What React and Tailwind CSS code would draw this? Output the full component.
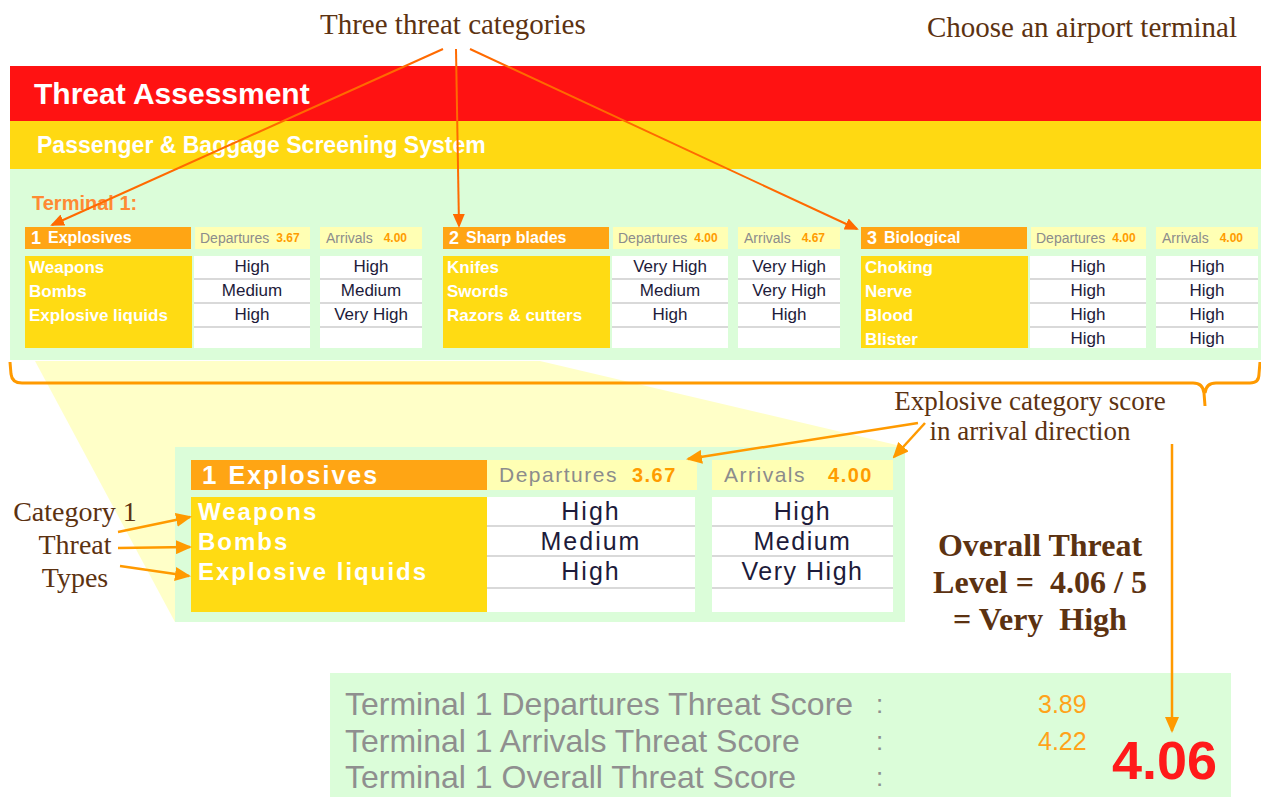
const categories = [
  {
    num: '2',
    name: 'Sharp blades',
    dep: '4.00',
    arr: '4.67',
    rows: [
      ['Knifes', 'Very High', 'Very High'],
      ['Swords', 'Medium', 'Very High'],
      ['Razors & cutters', 'High', 'High'],
      ['', '', ''],
    ],
  },
];

const groups = [
  {
    num: '1',
    name: 'Explosives',
    dep: '3.67',
    arr: '4.00',
    rows: [
      ['Weapons', 'High', 'High'],
      ['Bombs', 'Medium', 'Medium'],
      ['Explosive liquids', 'High', 'Very High'],
      ['', '', ''],
    ],
  },
  ...categories,
  {
    num: '3',
    name: 'Biological',
    dep: '4.00',
    arr: '4.00',
    rows: [
      ['Choking', 'High', 'High'],
      ['Nerve', 'High', 'High'],
      ['Blood', 'High', 'High'],
      ['Blister', 'High', 'High'],
    ],
  },
];

const serif = "font-['Liberation_Serif','Times_New_Roman',serif] text-[#5c3211]";
const smallRows = ['h-[24px]', 'h-[24px]', 'h-[24px]', 'h-[20px]'];

const CellColumn = ({ values, widthClass, rowClasses, textClass }) => (
  <div className={`${widthClass} flex flex-col`}>
    {values.map((v, i) => (
      <div
        key={i}
        className={`${rowClasses[i]} bg-white text-center text-[#1d1b3a] ${textClass} ${
          i < values.length - 1 ? 'border-b-2 border-[#d9d9d9]' : ''
        }`}
      >
        {v}
      </div>
    ))}
  </div>
);

const Group = ({ g }) => (
  <div className="w-[397px]">
    <div className="flex h-[22px]">
      <div className="w-[166px] bg-[#ffa514] text-white font-bold flex items-center pl-[6px]">
        <span className="text-[18px] leading-none">{g.num}</span>
        <span className="text-[16px] leading-none ml-[7px]">{g.name}</span>
      </div>
      <div className="ml-[4px] w-[115px] bg-[#ffffb4] flex items-center pl-[5px]">
        <span className="text-[14px] text-[#8c8c8c]">Departures</span>
        <span className="text-[12px] font-bold text-[#ff9c00] ml-[7px]">{g.dep}</span>
      </div>
      <div className="ml-[10px] w-[102px] bg-[#ffffb4] flex items-center pl-[6px]">
        <span className="text-[14px] text-[#8c8c8c]">Arrivals</span>
        <span className="text-[12px] font-bold text-[#ff9c00] ml-[11px]">{g.arr}</span>
      </div>
    </div>
    <div className="flex mt-[7px]">
      <div className="w-[167px] h-[92px] bg-[#ffdb13] pl-[4px] text-white font-bold text-[17px]">
        {g.rows.map((r, i) => (
          <div key={i} className={`${smallRows[i]} leading-[24px]`}>
            {r[0]}
          </div>
        ))}
      </div>
      <div className="ml-[2px]">
        <CellColumn
          values={g.rows.map((r) => r[1])}
          widthClass="w-[116px]"
          rowClasses={smallRows}
          textClass="text-[17px] leading-[22px]"
        />
      </div>
      <div className="ml-[10px]">
        <CellColumn
          values={g.rows.map((r) => r[2])}
          widthClass="w-[102px]"
          rowClasses={smallRows}
          textClass="text-[17px] leading-[22px]"
        />
      </div>
    </div>
  </div>
);

const Overlay = () => (
  <svg className="absolute inset-0 pointer-events-none" width="1261" height="798">
    <defs>
      <marker id="hRed" markerWidth="14" markerHeight="12" refX="12" refY="6" orient="auto" markerUnits="userSpaceOnUse">
        <path d="M0,0 L14,6 L0,12 Z" fill="#ff6a00" />
      </marker>
      <marker id="hOr" markerWidth="16" markerHeight="14" refX="14" refY="7" orient="auto" markerUnits="userSpaceOnUse">
        <path d="M0,0 L16,7 L0,14 Z" fill="#ff9a00" />
      </marker>
    </defs>
    {/* three categories */}
    <g stroke="#ff6a00" strokeWidth="2" fill="none">
      <line x1="443" y1="49" x2="52" y2="225" markerEnd="url(#hRed)" />
      <line x1="456" y1="49" x2="459" y2="226" markerEnd="url(#hRed)" />
      <line x1="470" y1="49" x2="857" y2="229" markerEnd="url(#hRed)" />
    </g>
    {/* brace */}
    <path
      d="M10,362 L11,374 Q12,383 22,383 L1193,383 Q1203,383 1204,393 L1205,406 M1205,393 Q1206,383 1216,383 L1250,383 Q1259,383 1259,374 L1260,362"
      stroke="#ff9a00"
      strokeWidth="3"
      fill="none"
    />
    <g stroke="#ff9a00" strokeWidth="2.5" fill="none">
      <line x1="118" y1="532" x2="190" y2="517" markerEnd="url(#hOr)" />
      <line x1="118" y1="548" x2="190" y2="547" markerEnd="url(#hOr)" />
      <line x1="120" y1="566" x2="189" y2="576" markerEnd="url(#hOr)" />
      <line x1="918" y1="423" x2="688" y2="459" markerEnd="url(#hOr)" />
      <line x1="925" y1="423" x2="894" y2="457" markerEnd="url(#hOr)" />
      <line x1="1172" y1="444" x2="1172" y2="731" markerEnd="url(#hOr)" />
    </g>
  </svg>
);

const zoom = groups[0];
const zoomRows = ['h-[30px]', 'h-[30px]', 'h-[30px]'];

export default function App() {
  return (
    <div className="relative w-[1261px] h-[798px] overflow-hidden bg-white font-['Liberation_Sans',Arial,sans-serif]">
      {/* zoom projection */}
      <svg className="absolute inset-0" width="1261" height="798">
        <polygon points="35,361 540,361 905,447 905,622 175,622" fill="#ffffc8" />
      </svg>

      <div className="relative">
        {/* annotations on top */}
        <div className={`h-[66px] flex justify-between ${serif} text-[29px] leading-[32px]`}>
          <div className="pl-[320px] pt-[8px]">Three threat categories</div>
          <div className="pr-[24px] pt-[11px]">Choose an airport terminal</div>
        </div>

        <div className="ml-[10px] h-[55px] bg-[#ff1212] flex items-center pl-[24px] text-white font-bold text-[30px]">
          Threat Assessment
        </div>
        <div className="ml-[10px] h-[48px] bg-[#ffd912] flex items-center pl-[27px] text-white font-bold text-[23px]">
          Passenger &amp; Baggage Screening System
        </div>
        <div className="ml-[10px] h-[191px] bg-[#dbfdd9] pl-[15px] pt-[22px]">
          <div className="pl-[7px] text-[20px] leading-[24px] font-bold text-[#ff8a33]">Terminal 1:</div>
          <div className="flex gap-[21px] mt-[12px]">
            {groups.map((g) => (
              <Group key={g.num} g={g} />
            ))}
          </div>
        </div>

        {/* spacer with annotation */}
        <div className="h-[87px]">
          <div className={`ml-[880px] w-[300px] pt-[26px] text-center text-[27px] leading-[30px] ${serif}`}>
            Explosive category score
            <br />
            in arrival direction
          </div>
        </div>

        {/* zoomed category */}
        <div className="flex h-[175px]">
          <div className={`w-[150px] mr-[25px] pt-[48px] text-center text-[28px] leading-[33px] ${serif}`}>
            Category 1
            <br />
            Threat
            <br />
            Types
          </div>
          <div className="w-[730px] bg-[#dbfdd9] pl-[16px] pt-[13px]">
            <div className="flex h-[30px]">
              <div className="w-[296px] bg-[#ffa514] text-white font-bold flex items-center pl-[11px] tracking-[2px]">
                <span className="text-[26px] leading-none">{zoom.num}</span>
                <span className="text-[25px] leading-none ml-[10px]">{zoom.name}</span>
              </div>
              <div className="w-[210px] bg-[#ffffb4] flex items-center pl-[12px] tracking-[1.5px]">
                <span className="text-[21px] text-[#8c8c8c]">Departures</span>
                <span className="text-[20px] font-bold text-[#ff9c00] ml-[14px]">{zoom.dep}</span>
              </div>
              <div className="ml-[15px] w-[181px] bg-[#ffffb4] flex items-center pl-[12px] tracking-[1.5px]">
                <span className="text-[21px] text-[#8c8c8c]">Arrivals</span>
                <span className="text-[20px] font-bold text-[#ff9c00] ml-[22px]">{zoom.arr}</span>
              </div>
            </div>
            <div className="flex mt-[7px]">
              <div className="w-[296px] h-[115px] bg-[#ffdb13] pl-[7px] text-white font-bold text-[24px] tracking-[2px]">
                {zoom.rows.slice(0, 3).map((r, i) => (
                  <div key={i} className="h-[30px] leading-[30px]">
                    {r[0]}
                  </div>
                ))}
              </div>
              <div className="w-[208px]">
                <CellColumn
                  values={zoom.rows.slice(0, 3).map((r) => r[1])}
                  widthClass="w-[208px]"
                  rowClasses={zoomRows}
                  textClass="text-[25px] leading-[28px] tracking-[2px]"
                />
                <div className="h-[25px] bg-white border-t-2 border-[#d9d9d9]" />
              </div>
              <div className="ml-[17px] w-[181px]">
                <CellColumn
                  values={zoom.rows.slice(0, 3).map((r) => r[2])}
                  widthClass="w-[181px]"
                  rowClasses={zoomRows}
                  textClass="text-[25px] leading-[28px] tracking-[1.5px]"
                />
                <div className="h-[25px] bg-white border-t-2 border-[#d9d9d9]" />
              </div>
            </div>
          </div>
          <div className={`ml-[5px] w-[260px] pt-[80px] text-center font-bold text-[32px] leading-[37px] ${serif}`}>
            Overall Threat
            <br />
            Level = &nbsp;4.06 / 5
            <br />
            = Very &nbsp;High
          </div>
        </div>

        {/* terminal summary */}
        <div className="ml-[330px] mt-[51px] w-[901px] h-[124px] bg-[#dbfdd9] flex">
          <div className="grid grid-cols-[531px_162px_70px] pl-[15px] pt-[14px] text-[32px] leading-[35px]">
            {[
              ['Terminal 1 Departures Threat Score', '3.89'],
              ['Terminal 1 Arrivals Threat Score', '4.22'],
              ['Terminal 1 Overall Threat Score', ''],
            ].map(([label, val]) => (
              <div key={label} className="contents">
                <div className="text-[#8f8f8f]">{label}</div>
                <div className="text-[#8f8f8f] text-[26px]">:</div>
                <div className="text-[#ffa31a] text-[25px]">{val}</div>
              </div>
            ))}
          </div>
          <div className="ml-[4px] pt-[60px] text-[54px] leading-none font-bold text-[#ff1a1a]">4.06</div>
        </div>
      </div>

      <Overlay />
    </div>
  );
}
